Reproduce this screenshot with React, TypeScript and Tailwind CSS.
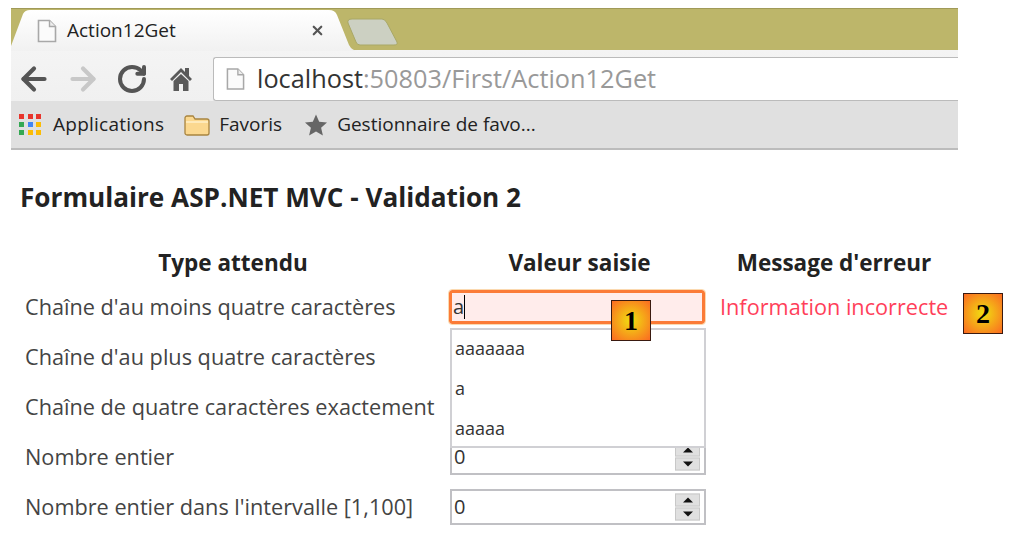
import React from 'react'
import { ArrowLeft, ArrowRight, RotateCw, X } from 'lucide-react'

const pageFont = "font-['Open_Sans','Noto_Sans',sans-serif]"

function PageIcon({ className }: { className: string }) {
  return (
    <svg viewBox="0 0 20 24" className={className}>
      <path d="M1.500 1.500h11l6 6v15h-17z" fill="#fbfbfb" stroke="#a8a8a8" strokeWidth="1.6" />
      <path d="M12.500 1.500v6h6" fill="#eee" stroke="#a8a8a8" strokeWidth="1.4" />
    </svg>
  )
}

function HomeIcon() {
  return (
    <svg viewBox="0 0 24 26" className="w-[24px] h-[26px]">
      <path d="M1 13 12 2l4 4V2h4v8l3 3-2 2-9-9-9 9z" fill="#5a5a5a" />
      <path d="M4.500 15 12 8l7.500 7v10H14v-7h-4v7H4.500z" fill="#5a5a5a" />
    </svg>
  )
}

function AppsIcon() {
  const colors = ['#e8352c', '#e8352c', '#e8352c', '#34a853', '#4285f4', '#fbbc05', '#34a853', '#fbbc05', '#fbbc05']
  return (
    <div className="grid grid-cols-3 gap-[3px] w-[23px]">
      {colors.map((c, i) => (
        <span key={i} className="w-[5px] h-[5px]" style={{ backgroundColor: c }} />
      ))}
    </div>
  )
}

function FolderIcon() {
  return (
    <svg viewBox="0 0 26 22" className="w-[26px] h-[22px]">
      <path d="M1 4a2 2 0 0 1 2-2h6l2 3h12a2 2 0 0 1 2 2v12a2 2 0 0 1-2 2H3a2 2 0 0 1-2-2z" fill="#fbd88f" stroke="#a8843f" strokeWidth="1.3" />
      <path d="M2 8h22" stroke="#fff0c8" strokeWidth="1.500" />
    </svg>
  )
}

function StarIcon() {
  return (
    <svg viewBox="0 0 24 24" className="w-[24px] h-[24px]">
      <path d="M12 1.500l3.200 7.300 7.800.7-5.900 5.200 1.800 7.800L12 18.400l-6.900 4.100 1.800-7.800L1 9.500l7.800-.7z" fill="#666" />
    </svg>
  )
}

function Chrome() {
  return (
    <div className="w-[947px] ml-[11px] font-['Open_Sans',sans-serif]">
      <div className="relative h-[42px] bg-[#bdb66a] border-t border-[#a09a58]">
        <svg viewBox="0 0 350 42" className="absolute left-0 top-0 w-[350px] h-[42px]">
          <defs>
            <linearGradient id="tabFill" x1="0" y1="0" x2="0" y2="1">
              <stop offset="0" stopColor="#ffffff" />
              <stop offset="1" stopColor="#f1f1f1" />
            </linearGradient>
          </defs>
          <path d="M0 37 12 5Q14 1 19 1H318Q324 1 326 6L338 36Q341 42 348 42H0Z" fill="url(#tabFill)" />
        </svg>
        <svg viewBox="0 0 52 28" className="absolute left-[335px] top-[9px] w-[52px] h-[28px]">
          <path d="M2 5Q1 1 6 1H36Q39 1 41 5L51 24Q52 27 48 27H14Q11 27 10 24Z" fill="#ccd0c2" stroke="#a9a866" strokeWidth="1" />
        </svg>
        <div className="relative flex items-center h-full pl-[26px] pt-[2px]">
          <PageIcon className="w-[20px] h-[24px]" />
          <span className="ml-[10px] text-[19px] text-[#222]">Action12Get</span>
          <X className="w-[15px] h-[15px] ml-[134px] text-[#555]" strokeWidth={3.5} />
        </div>
      </div>
      <div className="h-[51px] bg-gradient-to-b from-[#f4f4f4] to-[#f0f0f0] flex items-end pl-[5px]">
        <div className="flex items-center h-[44px]">
          <ArrowLeft className="w-[36px] h-[36px] text-[#555]" strokeWidth={2.8} />
          <ArrowRight className="w-[36px] h-[36px] text-[#c8c8c8] ml-[13px]" strokeWidth={2.8} />
          <RotateCw className="w-[32px] h-[32px] text-[#555] ml-[15px]" strokeWidth={3} />
          <div className="ml-[21px]"><HomeIcon /></div>
        </div>
        <div className="flex-1 h-[44px] ml-[20px] bg-white border border-[#bbb] border-r-0 rounded-tl-[3px] rounded-bl-[3px] flex items-center pl-[12px]">
          <PageIcon className="w-[19px] h-[24px]" />
          <span className="ml-[12px] text-[25.3px] text-[#999]">
            <span className="text-[#333]">localhost</span>:50803/First/Action12Get
          </span>
        </div>
      </div>
      <div className="h-[49px] bg-[#e0e0e0] border-b-2 border-[#bcbcbc] flex items-center pl-[8px] text-[19px] text-[#222]">
        <AppsIcon />
        <span className="ml-[11px] tracking-[0.25px]">Applications</span>
        <div className="ml-[20px]"><FolderIcon /></div>
        <span className="ml-[9px]">Favoris</span>
        <div className="ml-[22px]"><StarIcon /></div>
        <span className="ml-[9px]">Gestionnaire de favo...</span>
      </div>
    </div>
  )
}

function Spinner() {
  return (
    <div className="absolute right-[4px] top-1/2 -translate-y-1/2 w-[25px] flex flex-col gap-[1px]">
      <div className="h-[13px] bg-[#e0e0e0] border border-[#c8c8c8] flex items-center justify-center">
        <span className="w-0 h-0 border-x-[5px] border-x-transparent border-b-[5px] border-b-[#111]" />
      </div>
      <div className="h-[13px] bg-[#e0e0e0] border border-[#c8c8c8] flex items-center justify-center">
        <span className="w-0 h-0 border-x-[5px] border-x-transparent border-t-[5px] border-t-[#111]" />
      </div>
    </div>
  )
}

function Badge({ n, className }: { n: number; className: string }) {
  return (
    <div
      className={`absolute w-[40px] h-[41px] border border-[#3a1a10] bg-[radial-gradient(circle,#f0e010,#fb6a22)] flex items-center justify-center font-['Liberation_Serif',serif] font-bold text-[28px] text-black ${className}`}
    >
      {n}
    </div>
  )
}

function NumberInput({ className = '' }: { className?: string }) {
  return (
    <div className={`relative w-[256px] border-2 border-[#c0c0c4] bg-white text-[20px] text-[#333] pl-[2px] flex items-center ${className}`}>
      0
      <Spinner />
    </div>
  )
}

function Label({ children }: { children: React.ReactNode }) {
  return <div className="h-[50px] pl-[5px] flex items-center whitespace-nowrap">{children}</div>
}

function Cell({ children }: { children?: React.ReactNode }) {
  return <div className="h-[50px] flex items-center">{children}</div>
}

export default function App() {
  return (
    <div className="w-[1019px] h-[554px] bg-white overflow-hidden pt-[8px]">
      <Chrome />
      <div className={`${pageFont} relative pl-[20px] pt-[30px]`}>
        <h1 className="h-[34px] leading-[34px] text-[26.15px] font-bold text-[#222] whitespace-nowrap">
          Formulaire ASP.NET MVC - Validation 2
        </h1>
        <div className="mt-[30px] grid grid-cols-[424px_276px_auto] text-[21.7px] text-[#444]">
          <div className="h-[38px] flex items-center justify-center pl-[2px] font-bold text-[22.5px] text-[#222]">Type attendu</div>
          <div className="h-[38px] flex items-center justify-center pr-[5px] font-bold text-[22.5px] text-[#222]">Valeur saisie</div>
          <div className="h-[38px] flex items-center justify-center w-[228px] font-bold text-[22.5px] text-[#222] whitespace-nowrap">Message d'erreur</div>

          <Label>Chaîne d'au moins quatre caractères</Label>
          <Cell>
            <div className="ml-[5px] w-[256px] h-[34px] bg-[#ffeceb] border-[3px] border-[#fb7b37] rounded-[3px] outline-1 outline-[#fbd9b0] flex items-center pl-[1px] text-[20px] text-[#333]">
              a<span className="w-px h-[24px] bg-black" />
            </div>
          </Cell>
          <Cell><span className="text-[#ff3f5a] whitespace-nowrap">Information incorrecte</span></Cell>

          <Label>Chaîne d'au plus quatre caractères</Label>
          <Cell />
          <Cell />

          <Label>Chaîne de quatre caractères exactement</Label>
          <Cell />
          <Cell />

          <Label>Nombre entier</Label>
          <Cell><NumberInput className="ml-[6px] h-[35px]" /></Cell>
          <Cell />

          <Label>Nombre entier dans l'intervalle [1,100]</Label>
          <Cell><NumberInput className="ml-[6px] h-[36px]" /></Cell>
          <Cell />
        </div>
        <div className="absolute left-[450px] top-[178px] w-[256px] h-[120px] bg-white border-2 border-[#d0d0d4] pl-[3px] text-[18px] text-[#333] flex flex-col">
          <div className="h-[40px] shrink-0 -mt-[2px] flex items-center">aaaaaaa</div>
          <div className="h-[40px] shrink-0 flex items-center">a</div>
          <div className="h-[40px] shrink-0 flex items-center">aaaaa</div>
        </div>
        <Badge n={1} className="left-[611px] top-[150px]" />
        <Badge n={2} className="left-[963px] top-[143px]" />
      </div>
    </div>
  )
}
